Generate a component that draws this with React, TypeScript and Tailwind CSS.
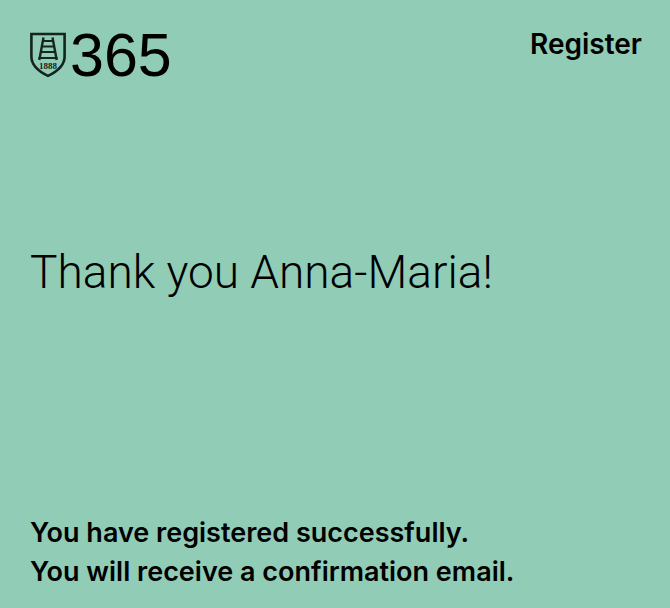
function Logo() {
  return (
    <a href="#" className="flex items-center gap-1 text-black">
      <svg
        viewBox="0 0 36 46"
        className="h-[46px] w-9 shrink-0"
        fill="none"
        stroke="#14251f"
        aria-hidden="true"
      >
        <path
          d="M1.4 2h33.2v22.500c0 9.600-8.200 15.400-16.600 19.400C9.600 39.900 1.400 34.100 1.400 24.500z"
          strokeWidth="2.6"
        />
        <path d="M13.500 5.500 9.300 28M22.500 5.500l4.200 22.500" strokeWidth="2.400" />
        <path
          d="M12.500 9h11M11.500 14.500h13M10.500 20h15M8.500 26h19"
          strokeWidth="2.200"
        />
        <text
          x="18"
          y="37"
          textAnchor="middle"
          className="font-['Liberation_Serif',serif] text-[9px] font-bold"
          fill="#14251f"
          stroke="none"
        >
          1888
        </text>
      </svg>
      <span className="font-['Liberation_Sans',sans-serif] text-[61px] leading-[46px]">
        365
      </span>
    </a>
  );
}

export default function App() {
  return (
    <div className="flex min-h-screen flex-col justify-between bg-[#91ccb6] pt-8 pr-7 pb-[17px] pl-[30px] font-['Inter',sans-serif] text-black">
      <header className="flex items-start justify-between">
        <Logo />
        <a href="#" className="text-[28px] leading-6 font-semibold">
          Register
        </a>
      </header>

      <main className="flex flex-1 flex-col justify-between pt-[166px]">
        <h1 className="font-['Roboto',sans-serif] text-[46px] leading-[56px] font-light">
          Thank you Anna-Maria!
        </h1>

        <div className="text-[27px] leading-[39px] font-semibold">
          <p>You have registered successfully.</p>
          <p>You will receive a confirmation email.</p>
        </div>
      </main>
    </div>
  );
}
